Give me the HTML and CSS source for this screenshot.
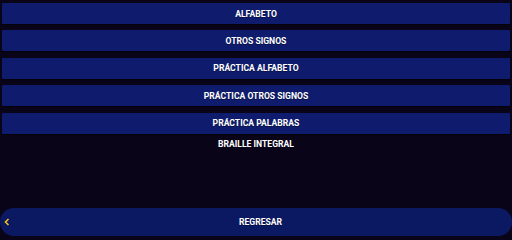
FILE: index.html
```html
<!DOCTYPE html>
<html lang="es">
<head>
<meta charset="utf-8">
<link rel="stylesheet" href="styles.css">
</head>
<body>
<div class="screen">
  <div class="menu">
    <div class="btn">ALFABETO</div>
    <div class="btn">OTROS SIGNOS</div>
    <div class="btn">PRÁCTICA ALFABETO</div>
    <div class="btn">PRÁCTICA OTROS SIGNOS</div>
    <div class="btn">PRÁCTICA PALABRAS</div>
    <div class="label">BRAILLE INTEGRAL</div>
  </div>
  <div class="back">
    <svg class="chev" width="6" height="8" viewBox="0 0 6 8"><path d="M4.5 1 L1.5 4 L4.5 7" fill="none" stroke="#f2c21b" stroke-width="1.6"/></svg>
    <span class="back-text">REGRESAR</span>
  </div>
</div>
</body>
</html>
```
FILE: styles.css
```css
html, body {
  margin: 0;
  padding: 0;
  background: #0a0418;
}
.screen {
  width: 512px;
  height: 236px;
  display: flex;
  flex-direction: column;
  justify-content: space-between;
  font-family: Roboto, "Liberation Sans", sans-serif;
  font-weight: 700;
  font-size: 8.6px;
  color: #ffffff;
}
.menu {
  padding: 3px 2px 0;
  display: flex;
  flex-direction: column;
  gap: 6.4px;
}
.btn {
  height: 21px;
  background: #0f1c6d;
  border-radius: 1px;
  box-shadow: 0 1px 1px rgba(0, 0, 0, 0.5);
  display: flex;
  align-items: center;
  justify-content: center;
  text-shadow: 0 0.5px 0.5px rgba(0,0,0,0.4);
}
.label {
  margin-top: -4px;
  height: 16px;
  display: flex;
  align-items: center;
  justify-content: center;
}
.back {
  height: 28px;
  padding-left: 9px;
  background: #0b1862;
  border-radius: 14px;
  display: flex;
  align-items: center;
  justify-content: center;
  position: relative;
}
.chev {
  position: absolute;
  left: 4px;
  top: 10px;
}
.back-text {
  text-shadow: 0 0.5px 0.5px rgba(0,0,0,0.4);
}
```
